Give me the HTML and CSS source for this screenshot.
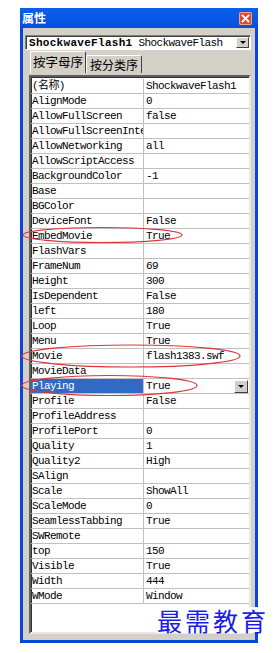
FILE: index.html
```html
<!DOCTYPE html>
<html lang="zh">
<head>
  <meta charset="UTF-8">
  <title>属性</title>
  <link rel="stylesheet" href="styles.css">
</head>
<body>
  <div class="window">
    <div class="titlebar">
      <span class="title">属性</span>
      <span class="close">
        <svg width="13" height="13" viewBox="0 0 13 13">
          <path d="M3.5 3.5 L9.5 9.5 M9.5 3.5 L3.5 9.5" stroke="#fff" stroke-width="1.8" stroke-linecap="square"/>
        </svg>
      </span>
    </div>

    <div class="combo">
      <span class="combo-text"><b>ShockwaveFlash1</b> ShockwaveFlash</span>
      <span class="drop-btn"><span class="arrow"></span></span>
    </div>

    <div class="tabs">
      <div class="tab active">按字母序</div>
      <div class="tab">按分类序</div>
    </div>

    <div class="grid">
      <div class="row"><span class="name">(名称)</span><span class="val">ShockwaveFlash1</span></div>
      <div class="row"><span class="name">AlignMode</span><span class="val">0</span></div>
      <div class="row"><span class="name">AllowFullScreen</span><span class="val">false</span></div>
      <div class="row"><span class="name">AllowFullScreenInteractive</span><span class="val"></span></div>
      <div class="row"><span class="name">AllowNetworking</span><span class="val">all</span></div>
      <div class="row"><span class="name">AllowScriptAccess</span><span class="val"></span></div>
      <div class="row"><span class="name">BackgroundColor</span><span class="val">-1</span></div>
      <div class="row"><span class="name">Base</span><span class="val"></span></div>
      <div class="row"><span class="name">BGColor</span><span class="val"></span></div>
      <div class="row"><span class="name">DeviceFont</span><span class="val">False</span></div>
      <div class="row"><span class="name">EmbedMovie</span><span class="val">True</span></div>
      <div class="row"><span class="name">FlashVars</span><span class="val"></span></div>
      <div class="row"><span class="name">FrameNum</span><span class="val">69</span></div>
      <div class="row"><span class="name">Height</span><span class="val">300</span></div>
      <div class="row"><span class="name">IsDependent</span><span class="val">False</span></div>
      <div class="row"><span class="name">left</span><span class="val">180</span></div>
      <div class="row"><span class="name">Loop</span><span class="val">True</span></div>
      <div class="row"><span class="name">Menu</span><span class="val">True</span></div>
      <div class="row"><span class="name">Movie</span><span class="val">flash1383.swf</span></div>
      <div class="row"><span class="name">MovieData</span><span class="val"></span></div>
      <div class="row selected"><span class="name">Playing</span><span class="val">True<span class="drop-btn cell-btn"><span class="arrow"></span></span></span></div>
      <div class="row"><span class="name">Profile</span><span class="val">False</span></div>
      <div class="row"><span class="name">ProfileAddress</span><span class="val"></span></div>
      <div class="row"><span class="name">ProfilePort</span><span class="val">0</span></div>
      <div class="row"><span class="name">Quality</span><span class="val">1</span></div>
      <div class="row"><span class="name">Quality2</span><span class="val">High</span></div>
      <div class="row"><span class="name">SAlign</span><span class="val"></span></div>
      <div class="row"><span class="name">Scale</span><span class="val">ShowAll</span></div>
      <div class="row"><span class="name">ScaleMode</span><span class="val">0</span></div>
      <div class="row"><span class="name">SeamlessTabbing</span><span class="val">True</span></div>
      <div class="row"><span class="name">SWRemote</span><span class="val"></span></div>
      <div class="row"><span class="name">top</span><span class="val">150</span></div>
      <div class="row"><span class="name">Visible</span><span class="val">True</span></div>
      <div class="row"><span class="name">Width</span><span class="val">444</span></div>
      <div class="row"><span class="name">WMode</span><span class="val">Window</span></div>
    </div>
  </div>

  <!-- red annotation marks drawn over the screenshot -->
  <svg class="marks" width="280" height="653" viewBox="0 0 280 653">
    <ellipse cx="102.5" cy="235" rx="79.5" ry="7.5" />
    <ellipse cx="131" cy="356" rx="109" ry="11" />
    <ellipse cx="109.5" cy="385.5" rx="87.5" ry="10" />
  </svg>

  <div class="watermark">最需教育</div>
</body>
</html>
```

FILE: styles.css
```css
body {
  margin: 0;
  background: #fff;
  font-family: "Liberation Mono", "Noto Sans CJK SC", monospace;
}

.window {
  width: 238px;
  height: 635px;
  margin: 8px 0 0 20px;
  box-sizing: border-box;
  background: #d4d0c8;
  border: 3px solid #0847d9;
  border-top: 0;
  display: flex;
  flex-direction: column;
}

.titlebar {
  height: 20px;
  margin: 0 -3px;
  padding: 0 6px 0 2px;
  background: linear-gradient(#0a60ec, #0550de);
  display: flex;
  align-items: center;
  justify-content: space-between;
}
.title {
  color: #fff;
  font: bold 12px "Noto Sans CJK SC", sans-serif;
  line-height: 20px;
}
.close {
  width: 13px;
  height: 13px;
  background: #dd4a2c;
  border-radius: 2px;
  box-shadow: inset 0 0 0 1px #f0a08c;
  display: flex;
}

.combo {
  height: 15px;
  margin: 7px 4px 0 2px;
  box-sizing: border-box;
  background: #fff;
  border-top: 1px solid #808080;
  border-left: 1px solid #808080;
  border-right: 1px solid #fff;
  border-bottom: 1px solid #fff;
  box-shadow: inset 1px 1px 0 #404040;
  display: flex;
  align-items: center;
  justify-content: space-between;
  padding-left: 3px;
}
.combo-text {
  font-size: 11px;
  letter-spacing: -0.6px;
  white-space: nowrap;
}
.combo-text b {
  letter-spacing: 0.3px;
}

.drop-btn {
  width: 13px;
  height: 11px;
  margin-right: 1px;
  box-sizing: border-box;
  background: #d4d0c8;
  border-top: 1px solid #fff;
  border-left: 1px solid #fff;
  border-right: 1px solid #404040;
  border-bottom: 1px solid #404040;
  display: flex;
  align-items: center;
  justify-content: center;
}
.arrow {
  width: 0;
  height: 0;
  border-left: 3px solid transparent;
  border-right: 3px solid transparent;
  border-top: 3px solid #000;
}

.tabs {
  height: 22px;
  margin: 1px 0 0 7px;
  display: flex;
  align-items: flex-end;
}
.tab {
  height: 18px;
  padding: 0 3px;
  box-sizing: border-box;
  border-top: 1px solid #fff;
  border-left: 1px solid #fff;
  border-right: 1px solid #404040;
  border-radius: 2px 2px 0 0;
  font: 12px "Noto Sans CJK SC", sans-serif;
  line-height: 17px;
  color: #000;
}
.tab.active {
  height: 22px;
  padding: 0 2px 0 2px;
  line-height: 19px;
  font-size: 12.5px;
}

.grid {
  flex: 1;
  margin: 2px 4px 6px 6px;
  padding-top: 2px;
  background: #fff;
  border-top: 2px solid #606060;
  border-left: 2px solid #606060;
  border-right: 2px solid #e8e8e8;
  border-bottom: 2px solid #e8e8e8;
  box-shadow: inset 1px 1px 0 #303030;
}

.row {
  display: grid;
  grid-template-columns: 113px 1fr;
  height: 15px;
  box-sizing: border-box;
  border-bottom: 1px solid #c0c0c0;
  font-size: 11px;
  letter-spacing: -0.6px;
  line-height: 14px;
  color: #000;
  white-space: nowrap;
}
.name {
  padding-left: 1px;
  border-right: 1px solid #c0c0c0;
  overflow: hidden;
}
.val {
  padding-left: 2px;
  display: flex;
  justify-content: space-between;
  align-items: center;
}
.selected .name {
  background: #316ac5;
  color: #fff;
}
.cell-btn {
  height: 13px;
  width: 14px;
}

.marks {
  position: absolute;
  left: 0;
  top: 0;
  pointer-events: none;
}
.marks ellipse {
  fill: none;
  stroke: #e0343a;
  stroke-width: 1.2;
}

.watermark {
  position: absolute;
  left: 157px;
  top: 607px;
  height: 26px;
  padding-right: 3px;
  background: #fff;
  color: #1c1ce8;
  font: 25px "Noto Sans CJK SC", sans-serif;
  line-height: 26px;
  letter-spacing: 3px;
}
```
